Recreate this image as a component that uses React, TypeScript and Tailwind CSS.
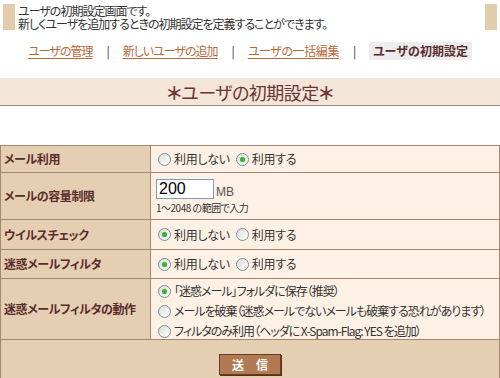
import React from "react";

const font = "[font-family:'Noto_Sans_CJK_JP','Noto_Sans',sans-serif] [font-feature-settings:'palt']";

function Radio({ checked }: { checked?: boolean }) {
  return (
    <span className="inline-flex w-[13px] h-[13px] rounded-full border border-[#7b8c9e] bg-gradient-to-br from-[#dcdcd6] to-white items-center justify-center shrink-0 mr-[3px]">
      {checked && <span className="w-[5px] h-[5px] rounded-full bg-[#3fae3a] shadow-[0_0_1px_#7ad06f]" />}
    </span>
  );
}

function Opt({ checked, label }: { checked?: boolean; label: string }) {
  return (
    <span className="flex items-center mr-[4px] whitespace-nowrap">
      <Radio checked={checked} />
      <span>{label}</span>
    </span>
  );
}

function Short({ checked, label }: { checked?: boolean; label: string }) {
  return (
    <span className="flex items-center mr-[6px] whitespace-nowrap tracking-[-0.3px]">
      <Radio checked={checked} />
      <span>{label}</span>
    </span>
  );
}

function Label({ children }: { children: React.ReactNode }) {
  return (
    <td className="w-[150px] p-0 bg-[#e5cfb3] border border-[#a88772] pl-[3px] font-bold tracking-[-0.4px] text-[#5a2c2c] align-middle">
      {children}
    </td>
  );
}

function Val({ children }: { children: React.ReactNode }) {
  return (
    <td className="p-0 bg-[#fdf1e5] border border-[#a88772] pl-[7px] text-[#333] align-middle">
      {children}
    </td>
  );
}

export default function App() {
  return (
    <div className={`w-[500px] h-[378px] bg-white overflow-hidden text-[12px] leading-[14px] tracking-[-1px] ${font}`}>
      <div className="mx-[3px] mt-[4px] border-x-[12px] border-[#e3ccac] pl-[3px] text-[#333] leading-[13px]">
        <div>ユーザの初期設定画面です。</div>
        <div>新しくユーザを追加するときの初期設定を定義することができます。</div>
      </div>

      <div className="mt-[12px] flex justify-center items-center h-[18px] text-[#333]">
        <a className="text-[#b8693a] underline underline-offset-2">ユーザの管理</a>
        <span className="mx-[14px]">|</span>
        <a className="text-[#b8693a] underline underline-offset-2">新しいユーザの追加</a>
        <span className="mx-[14px]">|</span>
        <a className="text-[#b8693a] underline underline-offset-2 tracking-[-0.4px]">ユーザの一括編集</a>
        <span className="mx-[14px]">|</span>
        <span className="bg-[#ededed] px-[4px] h-[18px] flex items-center font-bold tracking-[0px] text-[#5a2c2c]">ユーザの初期設定</span>
      </div>

      <div className="mt-[18px] h-[28px] bg-[#f3e5d8] border-b border-[#a88772] flex items-center justify-center text-[18px] leading-[20px] tracking-[-0.5px] text-[#6a3535]">
        <span className="font-bold">＊</span>ユーザの初期設定 <span className="font-bold">＊</span>
      </div>

      <table className="mt-[39px] w-[500px] border-collapse border border-[#a88772]">
        <tbody>
          <tr className="h-[27px]">
            <Label>メール利用</Label>
            <Val>
              <div className="flex items-center">
                <Short label="利用しない" />
                <Short checked label="利用する" />
              </div>
            </Val>
          </tr>
          <tr className="h-[47px]">
            <Label>メールの容量制限</Label>
            <td className="p-0 bg-[#fdf1e5] border border-[#a88772] pl-[5px] text-[#333] align-middle">
              <div className="flex items-end">
                <input
                  defaultValue="200"
                  className="w-[58px] h-[20px] border border-[#7f9db9] bg-white px-[2px] text-[16px] tracking-normal text-black [font-family:'Liberation_Sans',sans-serif] outline-none"
                />
                <span className="ml-[2px] text-[#555] tracking-normal [font-family:'Liberation_Sans',sans-serif]">MB</span>
              </div>
              <div className="text-[10px] leading-[13px] mt-[2px] tracking-[-0.5px] text-[#333]">1〜2048 の範囲で入力</div>
            </td>
          </tr>
          <tr className="h-[30px]">
            <Label>ウイルスチェック</Label>
            <Val>
              <div className="flex items-center">
                <Short checked label="利用しない" />
                <Short label="利用する" />
              </div>
            </Val>
          </tr>
          <tr className="h-[29px]">
            <Label>迷惑メールフィルタ</Label>
            <Val>
              <div className="flex items-center">
                <Short checked label="利用しない" />
                <Short label="利用する" />
              </div>
            </Val>
          </tr>
          <tr className="h-[59px]">
            <Label>迷惑メールフィルタの動作</Label>
            <Val>
              <div className="flex flex-col gap-[6px] pt-[5px] pb-[1px]">
                <Opt checked label="「迷惑メール」フォルダに保存（推奨）" />
                <Opt label="メールを破棄（迷惑メールでないメールも破棄する恐れがあります）" />
                <Opt label="フィルタのみ利用（ヘッダに X-Spam-Flag: YES を追加）" />
              </div>
            </Val>
          </tr>
          <tr className="h-[39px]">
            <td colSpan={2} className="p-0 bg-[#e5cfb3] border border-[#a88772] align-top pt-[14px]">
              <div className="flex justify-center">
                <button className="w-[62px] h-[21px] bg-[#b27a52] border border-[#6b3b22] shadow-[1px_1px_0_#5a3018] text-white font-bold text-[12px] tracking-normal flex items-center justify-center">
                  送　信
                </button>
              </div>
            </td>
          </tr>
        </tbody>
      </table>
    </div>
  );
}
